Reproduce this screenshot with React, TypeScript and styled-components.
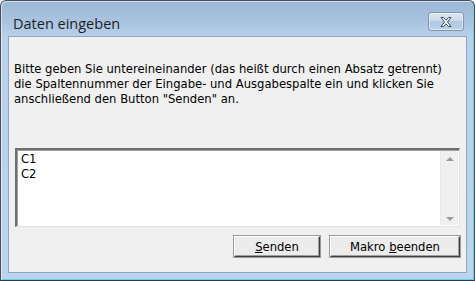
import React from "react";
import styled, { createGlobalStyle } from "styled-components";

const Global = createGlobalStyle`
  html, body { margin: 0; padding: 0; background: #ffffff; }
  #root { width: 475px; height: 281px; }
`;

const Window = styled.div`
  box-sizing: border-box;
  width: 475px;
  height: 281px;
  display: flex;
  flex-direction: column;
  border: 1px solid #4a4f57;
  border-bottom-color: #2d3a48;
  border-radius: 6px 6px 0 0;
  background: linear-gradient(to bottom, #9cb7d6 0px, #a9c3e0 20px, #b9d1ea 36px, #bdd4ec 100%);
  box-shadow: inset 1px 1px 0 rgba(255,255,255,0.55), inset -1px -1px 0 #5fd2ee;
  overflow: hidden;
`;

const TitleBar = styled.div`
  height: 35px;
  display: flex;
  align-items: flex-start;
  justify-content: space-between;
  padding: 0 10px 0 12px;
  flex-shrink: 0;
`;

const Title = styled.div`
  font-family: "Open Sans", "Noto Sans", sans-serif;
  font-size: 14.5px;
  color: #1e1e1e;
  margin-top: 14px;
  line-height: 18px;
`;

const CloseButton = styled.div`
  width: 36px;
  height: 19px;
  margin-top: 11px;
  box-sizing: border-box;
  border: 1px solid #7f95b0;
  border-radius: 3px;
  background: linear-gradient(to bottom, #dbe6f3 0%, #cbdaec 45%, #b2c8e2 50%, #bcd1ea 100%);
  box-shadow: inset 0 0 0 1px rgba(255,255,255,0.5);
  display: flex;
  align-items: center;
  justify-content: center;
`;

const Client = styled.div`
  flex: 1;
  margin: 0 7px 7px 7px;
  background: #f0f0f0;
  border: 1px solid #8ea6c4;
  display: flex;
  flex-direction: column;
`;

const Message = styled.p`
  margin: 25px 0 0 5px;
  font-family: "DejaVu Sans", "Liberation Sans", sans-serif;
  font-size: 11.6px;
  line-height: 15px;
  color: #000;
`;

const InputBox = styled.div`
  margin: 41px 6px 0 6px;
  height: 79px;
  box-sizing: border-box;
  display: flex;
  background: #ffffff;
  border-top: 2px solid #6e6e6e;
  border-left: 2px solid #6e6e6e;
  border-right: 1px solid #e4e4e4;
  border-bottom: 1px solid #e4e4e4;
  box-shadow: inset 1px 1px 0 #a0a0a0;
`;

const InputText = styled.div`
  flex: 1;
  padding: 2px 0 0 4px;
  font-family: "DejaVu Sans", "Liberation Sans", sans-serif;
  font-size: 11.6px;
  line-height: 15px;
  color: #000;
  white-space: pre;
`;

const ScrollBar = styled.div`
  width: 17px;
  margin: 1px 1px 1px 0;
  background: #f0f0f0;
  border-left: 1px solid #e8e8e8;
  display: flex;
  flex-direction: column;
  justify-content: space-between;
  align-items: center;
  padding: 6px 0 4px 0;
`;

const Arrow = styled.div<{ $down?: boolean }>`
  width: 0;
  height: 0;
  border-left: 4px solid transparent;
  border-right: 4px solid transparent;
  ${(p) =>
    p.$down
      ? "border-top: 4px solid #9a9a9a;"
      : "border-bottom: 4px solid #9a9a9a;"}
`;

const ButtonRow = styled.div`
  display: flex;
  justify-content: flex-end;
  gap: 10px;
  margin: 9px 6px 0 0;
`;

const Button = styled.button<{ $w: number }>`
  width: ${(p) => p.$w}px;
  height: 21px;
  box-sizing: border-box;
  padding: 0;
  background: #ececec;
  border: 1px solid;
  border-color: #ffffff #404040 #404040 #ffffff;
  box-shadow: inset -1px -1px 0 #a0a0a0;
  outline: 1px solid #9a9a9a;
  outline-offset: 0;
  font-family: "DejaVu Sans", "Liberation Sans", sans-serif;
  font-size: 11.6px;
  color: #000;
  cursor: default;
`;

const Key = styled.span`
  text-decoration: underline;
`;

export default function App() {
  return (
    <>
      <Global />
      <Window>
        <TitleBar>
          <Title>Daten eingeben</Title>
          <CloseButton>
            <svg width="16" height="12" viewBox="0 0 16 12">
              <path
                d="M3 1.5 L5.5 1.5 L8 4.2 L10.5 1.5 L13 1.5 L9.5 6 L13 10.5 L10.5 10.5 L8 7.8 L5.5 10.5 L3 10.5 L6.5 6 Z"
                fill="#ffffff"
                stroke="#3d4755"
                strokeWidth="1"
                strokeLinejoin="round"
              />
            </svg>
          </CloseButton>
        </TitleBar>
        <Client>
          <Message>
            Bitte geben Sie untereineinander (das heißt durch einen Absatz getrennt)
            <br />
            die Spaltennummer der Eingabe- und Ausgabespalte ein und klicken Sie
            <br />
            anschließend den Button "Senden" an.
          </Message>
          <InputBox>
            <InputText>{"C1\nC2"}</InputText>
            <ScrollBar>
              <Arrow />
              <Arrow $down />
            </ScrollBar>
          </InputBox>
          <ButtonRow>
            <Button $w={86}>
              <Key>S</Key>enden
            </Button>
            <Button $w={130}>
              Makro <Key>b</Key>eenden
            </Button>
          </ButtonRow>
        </Client>
      </Window>
    </>
  );
}
